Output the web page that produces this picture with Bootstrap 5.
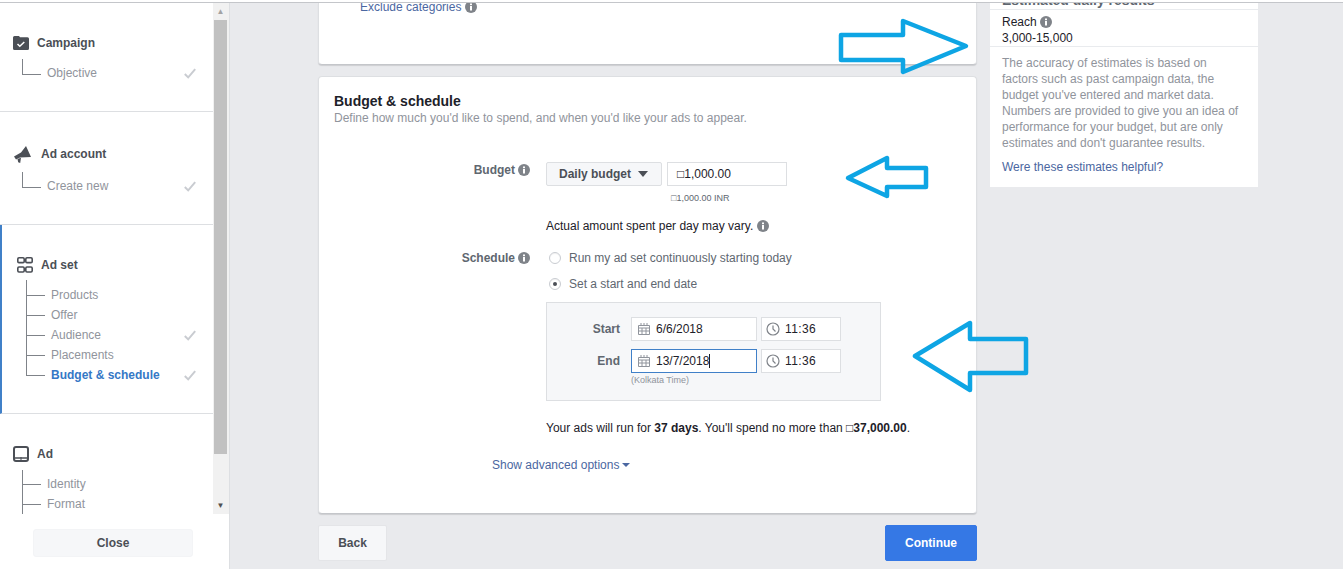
<!DOCTYPE html>
<html lang="en">
<head>
<meta charset="utf-8">
<title>Budget &amp; schedule</title>
<link href="https://cdn.jsdelivr.net/npm/bootstrap@5.3.0/dist/css/bootstrap.min.css" rel="stylesheet">
<style>
html,body{height:569px;overflow:hidden}
body{background:#e9eaed;font:12px/16px "Liberation Sans",Arial,sans-serif;color:#4b4f56;position:relative}
.topstrip{height:3px;background:#fff;border-bottom:1px solid #c4c6ca;position:relative;z-index:3}
.shell{height:566px}
.sidebar{width:230px;background:#fff;border-right:1px solid #dddfe2;flex:none}
.sidescroll{height:511px;overflow:hidden}
.sidelist{width:213px;flex:none}
.scrolltrack{width:16px;background:#f1f1f1;flex:none;padding:0 2px 0 1px;justify-content:space-between}
.scrollarrow{height:17px;color:#505050;font-size:8px;line-height:17px;text-align:center}
.scrollarrow.dim{color:#a3a3a3}
.scrollthumb{height:434px;background:#c1c1c1;margin-bottom:43px}
.stepgroup{border-bottom:1px solid #dddfe2;padding:0 0 0 13px}
.stepgroup.s1{height:109px;padding-top:32px}
.stepgroup.s2{height:113px;padding-top:34px}
.stepgroup.s3{height:189px;padding-top:32px;border-left:2px solid #4080c8;padding-left:15px}
.stepgroup.s4{padding-top:32px;border-bottom:0}
.stephead{font-weight:700;color:#4b4f56;height:16px;gap:8px;white-space:nowrap}
.s2 .stephead{gap:10px}
.s2 .stepicon{margin-left:1px}
.stepicon{flex:none;display:block}
.treeitem{height:20px;line-height:20px;color:#90949c;padding-left:34px;position:relative;width:183px;white-space:nowrap}
.treeitem::before{content:"";position:absolute;left:9px;top:-10px;width:19px;height:21px;border-left:1px solid #7f8389;border-bottom:1px solid #7f8389}
.s3 .treeitem{width:179px}
.s1 .firstitem{margin-top:12px}
.s2 .firstitem{margin-top:14px}
.s1 .firstitem::before,.s2 .firstitem::before{top:-4px;height:16px}
.s3 .firstitem,.s4 .firstitem{margin-top:12px}
.s3 .firstitem::before{top:-5px;height:16px}
.s4 .firstitem::before{top:-4px;height:15px}
.treeitem.more::after{content:"";position:absolute;left:9px;top:10px;height:12px;border-left:1px solid #7f8389}
.treeitem.on{color:#3578c6;font-weight:700}
.tick{position:absolute;right:0;top:5px}
.closearea{height:55px;padding:15px 20px 0 33px}
.closebtn{width:160px;height:28px;padding:0;font:700 12px/26px "Liberation Sans",Arial,sans-serif;background:#f6f7f9;border:1px solid #f3f4f6;border-radius:3px;color:#4b4f56}
.mainarea{padding-left:88px;gap:13px;min-width:0}
.centercol{width:659px;flex:none}
.panelcard{background:#fff;border:1px solid #dddfe2;border-bottom-color:#c4c6ca;border-radius:4px;box-shadow:0 1px 1px rgba(0,0,0,.12)}
.panelone{height:62px;border-top:0;border-radius:0 0 4px 4px;padding-left:41px;margin-bottom:11px;overflow:hidden}
.excl{color:#4b67a1;margin-top:-4px;white-space:nowrap}
.paneltwo{height:438px;padding:15px 15px 0;margin-bottom:11px}
.paneltitle{font-size:14px;font-weight:700;color:#1d2129;line-height:18px;margin-bottom:1px}
.subtitle{color:#90949c;line-height:15px}
.flabel{width:196px;flex:none;text-align:right;font-weight:700;color:#606770;gap:3px;justify-content:flex-end}
.info{display:inline-block;width:12px;height:12px;flex:none;vertical-align:-2px}
.budgetrow{margin-top:36px;height:24px}
.flabel.up{height:16px}
.fbody{margin-left:16px;width:430px;flex:none}
.ddbtn{width:116px;height:24px;background:#f6f7f9;border:1px solid #dddfe2;border-radius:2px;font-weight:700;color:#4b4f56;padding:0 0 0 12px;gap:7px;line-height:22px;white-space:nowrap}
.caretshape{width:0;height:0;border:5px solid transparent;border-top:6px solid #4b4f56;border-bottom:0}
.fakeinput{height:24px;background:#fff;border:1px solid #dddfe2;color:#1d2129;line-height:22px;white-space:nowrap}
.moneyinput{width:120px;margin-left:5px;padding-left:9px}
.tinyamt{font-size:9px;line-height:12px;color:#606770;margin:6px 0 0 125px}
.varyline{margin-top:14px;color:#1d2129}
.schedrow{margin-top:64px}
.radioline{height:16px;color:#606770;margin-bottom:10px;gap:8px;padding-left:3px}
.fakeradio{width:12px;height:12px;border-radius:50%;border:1px solid #c9ccd1;background:#fff;flex:none;box-shadow:inset 0 1px 1px rgba(0,0,0,.06);position:relative}
.fakeradio.sel::after{content:"";position:absolute;left:3px;top:3px;width:4px;height:4px;background:#4b4f56;border-radius:50%}
.datebox{width:335px;height:99px;background:#f6f7f9;border:1px solid #dddfe2;padding-top:14px}
.drow{height:24px;margin-bottom:8px}
.dlabel{width:73px;text-align:right;font-weight:700;color:#606770;flex:none;margin-right:11px}
.dateinput{width:126px;padding-left:6px;gap:6px;margin-right:4px}
.dateinput.focus{border-color:#4080c8}
.timeinput{width:80px;padding-left:4px;gap:5px;letter-spacing:.4px}
.caretline{width:1px;height:14px;background:#1d2129;display:inline-block;vertical-align:-3px}
.kolkata{font-size:9px;line-height:12px;color:#90949c;margin:-7px 0 0 84px}
.summary{margin-top:19px;color:#1d2129;white-space:nowrap}
.summary b{color:#1d2129}
.advanced{margin:21px 0 0 158px;color:#4b67a1}
.advcaret{display:inline-block;width:0;height:0;border:4px solid transparent;border-top:4px solid #4b67a1;border-bottom:0;margin-left:3px;vertical-align:2px}
.backbtn{width:69px;height:36px;background:#f6f7f9;border:1px solid #e4e5e8;border-radius:2px;font:700 12px/34px "Liberation Sans",Arial,sans-serif;color:#4b4f56;padding:0}
.contbtn{width:92px;height:36px;background:#3578e5;border:1px solid #3578e5;border-radius:2px;font:700 12px/34px "Liberation Sans",Arial,sans-serif;color:#fff;padding:0}
.estimate{width:268px;flex:none;background:#fff;height:184px;padding:0 12px}
.esthead{height:6px;overflow:hidden;margin:0 -12px;padding:0 12px}
.esthead div{font-size:14px;font-weight:700;color:#606770;margin-top:-11px;white-space:nowrap;line-height:16px}
.reachblock{border-top:1px solid #e9ebee;border-bottom:1px solid #e9ebee;margin:0 -12px;padding:4px 12px 0;height:38px;color:#1d2129}
.estnote{color:#90949c;margin-top:8px}
.esthelp{color:#4b67a1;margin-top:8px}
.arrows{position:absolute;left:0;top:0;width:1343px;height:569px;z-index:4;pointer-events:none}
</style>
</head>
<body>
<div class="topstrip"></div>
<div class="shell d-flex">
  <aside class="sidebar d-flex flex-column">
    <div class="sidescroll d-flex">
      <div class="sidelist">
        <section class="stepgroup s1">
          <div class="stephead d-flex align-items-center">
            <svg class="stepicon" width="16" height="14" viewBox="0 0 16 14"><path d="M1.500 0H6l1 1.200h7.500A1.500 1.500 0 0 1 16 2.700v9.800a1.500 1.500 0 0 1-1.500 1.500h-13A1.500 1.500 0 0 1 0 12.500v-11A1.500 1.500 0 0 1 1.500 0z" fill="#4b4f56"/><path d="M4.500 8l2.300 2.300 4.500-4.300" fill="none" stroke="#fff" stroke-width="1.500"/></svg>
            <span>Campaign</span>
          </div>
          <div class="treeitem firstitem">Objective
            <svg class="tick" width="12" height="11" viewBox="0 0 12 11"><path d="M.8 6l3.400 3.400L11.200 1.200" fill="none" stroke="#c9ccd1" stroke-width="2"/></svg>
          </div>
        </section>
        <section class="stepgroup s2">
          <div class="stephead d-flex align-items-center">
            <svg class="stepicon" width="17" height="17" viewBox="0 0 17 17"><path d="M12 0l5 11-11 .6-4 2L0 10.500l7-4z" fill="#4b4f56"/><path d="M3.500 13l3.500-1.200-.8 5.200-2-.8z" fill="#4b4f56"/></svg>
            <span>Ad account</span>
          </div>
          <div class="treeitem firstitem">Create new
            <svg class="tick" width="12" height="11" viewBox="0 0 12 11"><path d="M.8 6l3.400 3.400L11.200 1.200" fill="none" stroke="#c9ccd1" stroke-width="2"/></svg>
          </div>
        </section>
        <section class="stepgroup s3">
          <div class="stephead d-flex align-items-center">
            <svg class="stepicon" width="16" height="16" viewBox="0 0 16 16"><g fill="none" stroke="#4b4f56" stroke-width="1.600"><rect x=".8" y=".8" width="6.400" height="4.800" rx="1.200"/><rect x="8.800" y=".8" width="6.400" height="4.800" rx="1.200"/><rect x=".8" y="10" width="6.400" height="5" rx="1.200"/><rect x="8.800" y="10" width="6.400" height="5" rx="1.200"/></g></svg>
            <span>Ad set</span>
          </div>
          <div class="treeitem firstitem">Products</div>
          <div class="treeitem">Offer</div>
          <div class="treeitem">Audience
            <svg class="tick" width="12" height="11" viewBox="0 0 12 11"><path d="M.8 6l3.400 3.400L11.200 1.200" fill="none" stroke="#c9ccd1" stroke-width="2"/></svg>
          </div>
          <div class="treeitem">Placements</div>
          <div class="treeitem on">Budget &amp; schedule
            <svg class="tick" width="12" height="11" viewBox="0 0 12 11"><path d="M.8 6l3.400 3.400L11.200 1.200" fill="none" stroke="#c9ccd1" stroke-width="2"/></svg>
          </div>
        </section>
        <section class="stepgroup s4">
          <div class="stephead d-flex align-items-center">
            <svg class="stepicon" width="16" height="16" viewBox="0 0 16 16"><rect x="1" y="1" width="14" height="14" rx="2" fill="none" stroke="#4b4f56" stroke-width="2"/><path d="M1 12h14" stroke="#4b4f56" stroke-width="1.500"/><path d="M8 11v4" stroke="#4b4f56" stroke-width="1"/></svg>
            <span>Ad</span>
          </div>
          <div class="treeitem firstitem">Identity</div>
          <div class="treeitem more">Format</div>
        </section>
      </div>
      <div class="scrolltrack d-flex flex-column">
        <div class="scrollarrow dim">&#9650;</div>
        <div class="scrollthumb"></div>
        <div class="scrollarrow">&#9660;</div>
      </div>
    </div>
    <div class="closearea"><button class="btn closebtn" type="button">Close</button></div>
  </aside>

  <main class="mainarea d-flex">
    <div class="centercol">
      <div class="panelcard panelone"><div class="excl">Exclude categories <svg class="info" viewBox="0 0 12 12"><circle cx="6" cy="6" r="6" fill="#7f8389"/><rect x="5" y="5" width="2" height="4.500" fill="#fff"/><rect x="5" y="2.500" width="2" height="1.700" fill="#fff"/></svg></div></div>
      <div class="panelcard paneltwo">
        <div class="paneltitle">Budget &amp; schedule</div>
        <div class="subtitle">Define how much you'd like to spend, and when you'd like your ads to appear.</div>

        <div class="d-flex budgetrow">
          <div class="flabel up d-flex align-items-center"><span>Budget</span><svg class="info" viewBox="0 0 12 12"><circle cx="6" cy="6" r="6" fill="#7f8389"/><rect x="5" y="5" width="2" height="4.500" fill="#fff"/><rect x="5" y="2.500" width="2" height="1.700" fill="#fff"/></svg></div>
          <div class="fbody">
            <div class="d-flex">
              <div class="ddbtn d-flex align-items-center"><span>Daily budget</span><span class="caretshape"></span></div>
              <div class="fakeinput moneyinput">&#9633;1,000.00</div>
            </div>
            <div class="tinyamt">&#9633;1,000.00 INR</div>
            <div class="varyline">Actual amount spent per day may vary. <svg class="info" viewBox="0 0 12 12"><circle cx="6" cy="6" r="6" fill="#7f8389"/><rect x="5" y="5" width="2" height="4.500" fill="#fff"/><rect x="5" y="2.500" width="2" height="1.700" fill="#fff"/></svg></div>
          </div>
        </div>

        <div class="d-flex schedrow">
          <div class="flabel up d-flex align-items-center"><span>Schedule</span><svg class="info" viewBox="0 0 12 12"><circle cx="6" cy="6" r="6" fill="#7f8389"/><rect x="5" y="5" width="2" height="4.500" fill="#fff"/><rect x="5" y="2.500" width="2" height="1.700" fill="#fff"/></svg></div>
          <div class="fbody">
            <div class="radioline d-flex align-items-center"><span class="fakeradio"></span><span>Run my ad set continuously starting today</span></div>
            <div class="radioline d-flex align-items-center"><span class="fakeradio sel"></span><span>Set a start and end date</span></div>
            <div class="datebox">
              <div class="drow d-flex">
                <div class="dlabel align-self-center">Start</div>
                <div class="fakeinput dateinput d-flex align-items-center">
                  <svg width="12" height="12" viewBox="0 0 12 12"><g fill="none" stroke="#90949c"><path d="M.5 2.500h11v9H.5zM3 0v3M6 0v3M9 0v3M.5 5h11M4 5v6.500M8 5v6.500M.5 8h11"/></g></svg>
                  <span>6/6/2018</span>
                </div>
                <div class="fakeinput timeinput d-flex align-items-center">
                  <svg width="14" height="14" viewBox="0 0 14 14"><circle cx="7" cy="7" r="6" fill="none" stroke="#7f8389" stroke-width="1.200"/><path d="M7 3.500V7l2.500 2.500" fill="none" stroke="#7f8389" stroke-width="1.200"/></svg>
                  <span>11:36</span>
                </div>
              </div>
              <div class="drow d-flex">
                <div class="dlabel align-self-center">End</div>
                <div class="fakeinput dateinput focus d-flex align-items-center">
                  <svg width="12" height="12" viewBox="0 0 12 12"><g fill="none" stroke="#90949c"><path d="M.5 2.500h11v9H.5zM3 0v3M6 0v3M9 0v3M.5 5h11M4 5v6.500M8 5v6.500M.5 8h11"/></g></svg>
                  <span>13/7/2018<i class="caretline"></i></span>
                </div>
                <div class="fakeinput timeinput d-flex align-items-center">
                  <svg width="14" height="14" viewBox="0 0 14 14"><circle cx="7" cy="7" r="6" fill="none" stroke="#7f8389" stroke-width="1.200"/><path d="M7 3.500V7l2.500 2.500" fill="none" stroke="#7f8389" stroke-width="1.200"/></svg>
                  <span>11:36</span>
                </div>
              </div>
              <div class="kolkata">(Kolkata Time)</div>
            </div>
            <div class="summary">Your ads will run for <b>37 days</b>. You'll spend no more than <b>&#9633;37,000.00</b>.</div>
          </div>
        </div>
        <div class="advanced">Show advanced options<span class="advcaret"></span></div>
      </div>
      <div class="d-flex justify-content-between">
        <button class="btn backbtn" type="button">Back</button>
        <button class="btn contbtn" type="button">Continue</button>
      </div>
    </div>
    <div class="estimate">
      <div class="esthead"><div>Estimated daily results</div></div>
      <div class="reachblock">
        <div>Reach <svg class="info" viewBox="0 0 12 12"><circle cx="6" cy="6" r="6" fill="#7f8389"/><rect x="5" y="5" width="2" height="4.500" fill="#fff"/><rect x="5" y="2.500" width="2" height="1.700" fill="#fff"/></svg></div>
        <div>3,000-15,000</div>
      </div>
      <div class="estnote">The accuracy of estimates is based on factors such as past campaign data, the budget you've entered and market data. Numbers are provided to give you an idea of performance for your budget, but are only estimates and don't guarantee results.</div>
      <div class="esthelp">Were these estimates helpful?</div>
    </div>
  </main>
</div>
<svg class="arrows" viewBox="0 0 1343 569" aria-hidden="true">
  <g fill="none" stroke="#0ea5e4" stroke-width="4.500" stroke-linejoin="round">
    <path d="M841 35H903V21L966 46 903 72V60H841Z"/>
    <path d="M848 178 887 158V168H926V187H887V196Z"/>
    <path d="M915 356 970 323V339H1026V373H970V390Z"/>
  </g>
</svg>
</body>
</html>
